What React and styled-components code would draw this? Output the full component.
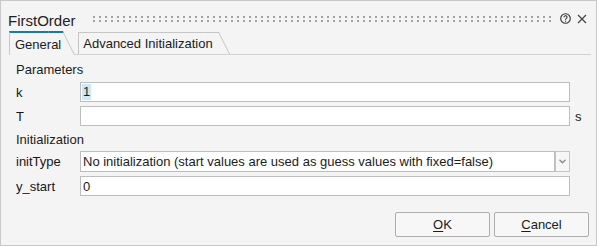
import React from "react";
import styled, { createGlobalStyle } from "styled-components";

const GlobalStyle = createGlobalStyle`
  html, body {
    margin: 0;
    padding: 0;
    background: #f4f4f4;
  }
  body {
    font-family: "Liberation Sans", Arial, sans-serif;
    font-size: 13px;
    color: #1b1b1b;
  }
`;

const Window = styled.div`
  width: 597px;
  height: 246px;
  box-sizing: border-box;
  border: 1px solid #c8c8c8;
  background: #f4f4f4;
  display: flex;
  flex-direction: column;
`;

const TitleBar = styled.div`
  height: 30px;
  box-sizing: border-box;
  padding: 5px 9px 0 7px;
  display: flex;
  align-items: center;
`;

const Title = styled.div`
  font-size: 15px;
  line-height: 1;
  color: #222;
  margin-top: 3px;
`;

const Grip = styled.div`
  flex: 1;
  height: 6px;
  margin: 0 8px 0 17px;
  background: repeating-linear-gradient(
    to right,
    #a2a2a2 0 2px,
    transparent 2px 6px
  );
  -webkit-mask-image: repeating-linear-gradient(
    to bottom,
    #000 0 2px,
    transparent 2px 4px
  );
  mask-image: repeating-linear-gradient(
    to bottom,
    #000 0 2px,
    transparent 2px 4px
  );
`;

const IconButton = styled.div`
  display: flex;
  align-items: center;
  justify-content: center;
  margin-left: ${(p) => p.$gap || 0}px;
`;

const TabBar = styled.div`
  display: flex;
  align-items: flex-end;
  height: 23px;
  margin: 0 5px 0 8px;
  border-bottom: 1px solid #d2d2d2;
`;

const Tab = styled.div`
  position: relative;
  z-index: 0;
  box-sizing: border-box;
  display: flex;
  align-items: center;
  height: ${(p) => (p.$active ? "24px" : "22px")};
  margin-bottom: ${(p) => (p.$active ? "-1px" : "0")};
  margin-left: ${(p) => (p.$active ? "0" : "15px")};
  padding: ${(p) => (p.$active ? "0 2px 0 5px" : "0 6px 0 4px")};
  border-left: 1px solid #c6c6c6;
  border-top: ${(p) => (p.$active ? "2px solid #1479ae" : "1px solid #c6c6c6")};
  background: #f4f4f4;
  white-space: nowrap;

  &::after {
    content: "";
    position: absolute;
    z-index: -1;
    top: ${(p) => (p.$active ? "-2px" : "-1px")};
    bottom: 0;
    right: 0;
    width: 14px;
    background: #f4f4f4;
    border-top: ${(p) => (p.$active ? "2px solid #1479ae" : "1px solid #c6c6c6")};
    border-right: 1px solid #c6c6c6;
    transform: skewX(26.5deg);
    transform-origin: top;
  }
`;

const Body = styled.div`
  display: flex;
  flex-direction: column;
  padding: 0 7px 0 15px;
`;

const SectionTitle = styled.div`
  height: 20px;
  line-height: 20px;
  margin-top: ${(p) => p.$mt}px;
`;

const Row = styled.div`
  display: grid;
  grid-template-columns: 64px 490px auto;
  align-items: center;
  height: ${(p) => p.$h || 20}px;
  margin-top: ${(p) => p.$mt}px;
`;

const Label = styled.div`
  color: #161616;
`;

const Field = styled.div`
  box-sizing: border-box;
  height: 100%;
  border: 1px solid #bdbdbd;
  background: #fff;
  padding: 0 0 0 ${(p) => p.$pad ?? 2}px;
  display: flex;
  align-items: center;
  white-space: nowrap;
  overflow: hidden;
`;

const Selected = styled.span`
  background: #cde8f6;
  line-height: 16px;
  padding: 0 1px;
`;

const Combo = styled.div`
  display: flex;
  height: 100%;
`;

const ComboText = styled(Field)`
  flex: 1;
`;

const ComboButton = styled.div`
  box-sizing: border-box;
  width: 15px;
  height: 100%;
  border: 1px solid #c4c4c4;
  background: #f7f7f7;
  display: flex;
  align-items: center;
  justify-content: center;
`;

const Unit = styled.div`
  padding-left: 5px;
`;

const Footer = styled.div`
  display: flex;
  justify-content: flex-end;
  gap: 4px;
  margin-top: 16px;
`;

const Button = styled.div`
  box-sizing: border-box;
  width: 95px;
  height: 25px;
  border: 1px solid #adadad;
  border-radius: 2px;
  background: #f7f7f7;
  display: flex;
  align-items: center;
  justify-content: center;
  color: #1b1b1b;

  & u {
    text-underline-offset: 2px;
  }
`;

const HelpIcon = () => (
  <svg width="11" height="11" viewBox="0 0 11 11">
    <circle cx="5.5" cy="5.5" r="4.8" fill="none" stroke="#333" strokeWidth="1.1" />
    <path
      d="M4 4.3a1.5 1.5 0 1 1 2.2 1.3c-.5.3-.7.6-.7 1.2"
      fill="none"
      stroke="#333"
      strokeWidth="1.1"
    />
    <circle cx="5.5" cy="8.2" r="0.65" fill="#333" />
  </svg>
);

const CloseIcon = () => (
  <svg width="10" height="10" viewBox="0 0 10 10">
    <path d="M1 1L9 9M9 1L1 9" stroke="#444" strokeWidth="1.2" />
  </svg>
);

const Chevron = () => (
  <svg width="7" height="5" viewBox="0 0 7 5">
    <path d="M0.5 0.8L3.5 3.8L6.5 0.8" fill="none" stroke="#8a8a8a" strokeWidth="1.4" />
  </svg>
);

export default function App() {
  return (
    <>
      <GlobalStyle />
      <Window>
        <TitleBar>
          <Title>FirstOrder</Title>
          <Grip />
          <IconButton>
            <HelpIcon />
          </IconButton>
          <IconButton $gap={6}>
            <CloseIcon />
          </IconButton>
        </TitleBar>

        <TabBar>
          <Tab $active>General</Tab>
          <Tab>Advanced Initialization</Tab>
        </TabBar>

        <Body>
          <SectionTitle $mt={5}>Parameters</SectionTitle>
          <Row $mt={2}>
            <Label>k</Label>
            <Field $pad={1}>
              <Selected>1</Selected>
            </Field>
          </Row>
          <Row $mt={4}>
            <Label>T</Label>
            <Field />
            <Unit>s</Unit>
          </Row>

          <SectionTitle $mt={4}>Initialization</SectionTitle>
          <Row $mt={1} $h={21}>
            <Label>initType</Label>
            <Combo>
              <ComboText>
                No initialization (start values are used as guess values with fixed=false)
              </ComboText>
              <ComboButton>
                <Chevron />
              </ComboButton>
            </Combo>
          </Row>
          <Row $mt={4}>
            <Label>y_start</Label>
            <Field>0</Field>
          </Row>

          <Footer>
            <Button>
              <span>
                <u>O</u>K
              </span>
            </Button>
            <Button>
              <span>
                <u>C</u>ancel
              </span>
            </Button>
          </Footer>
        </Body>
      </Window>
    </>
  );
}
